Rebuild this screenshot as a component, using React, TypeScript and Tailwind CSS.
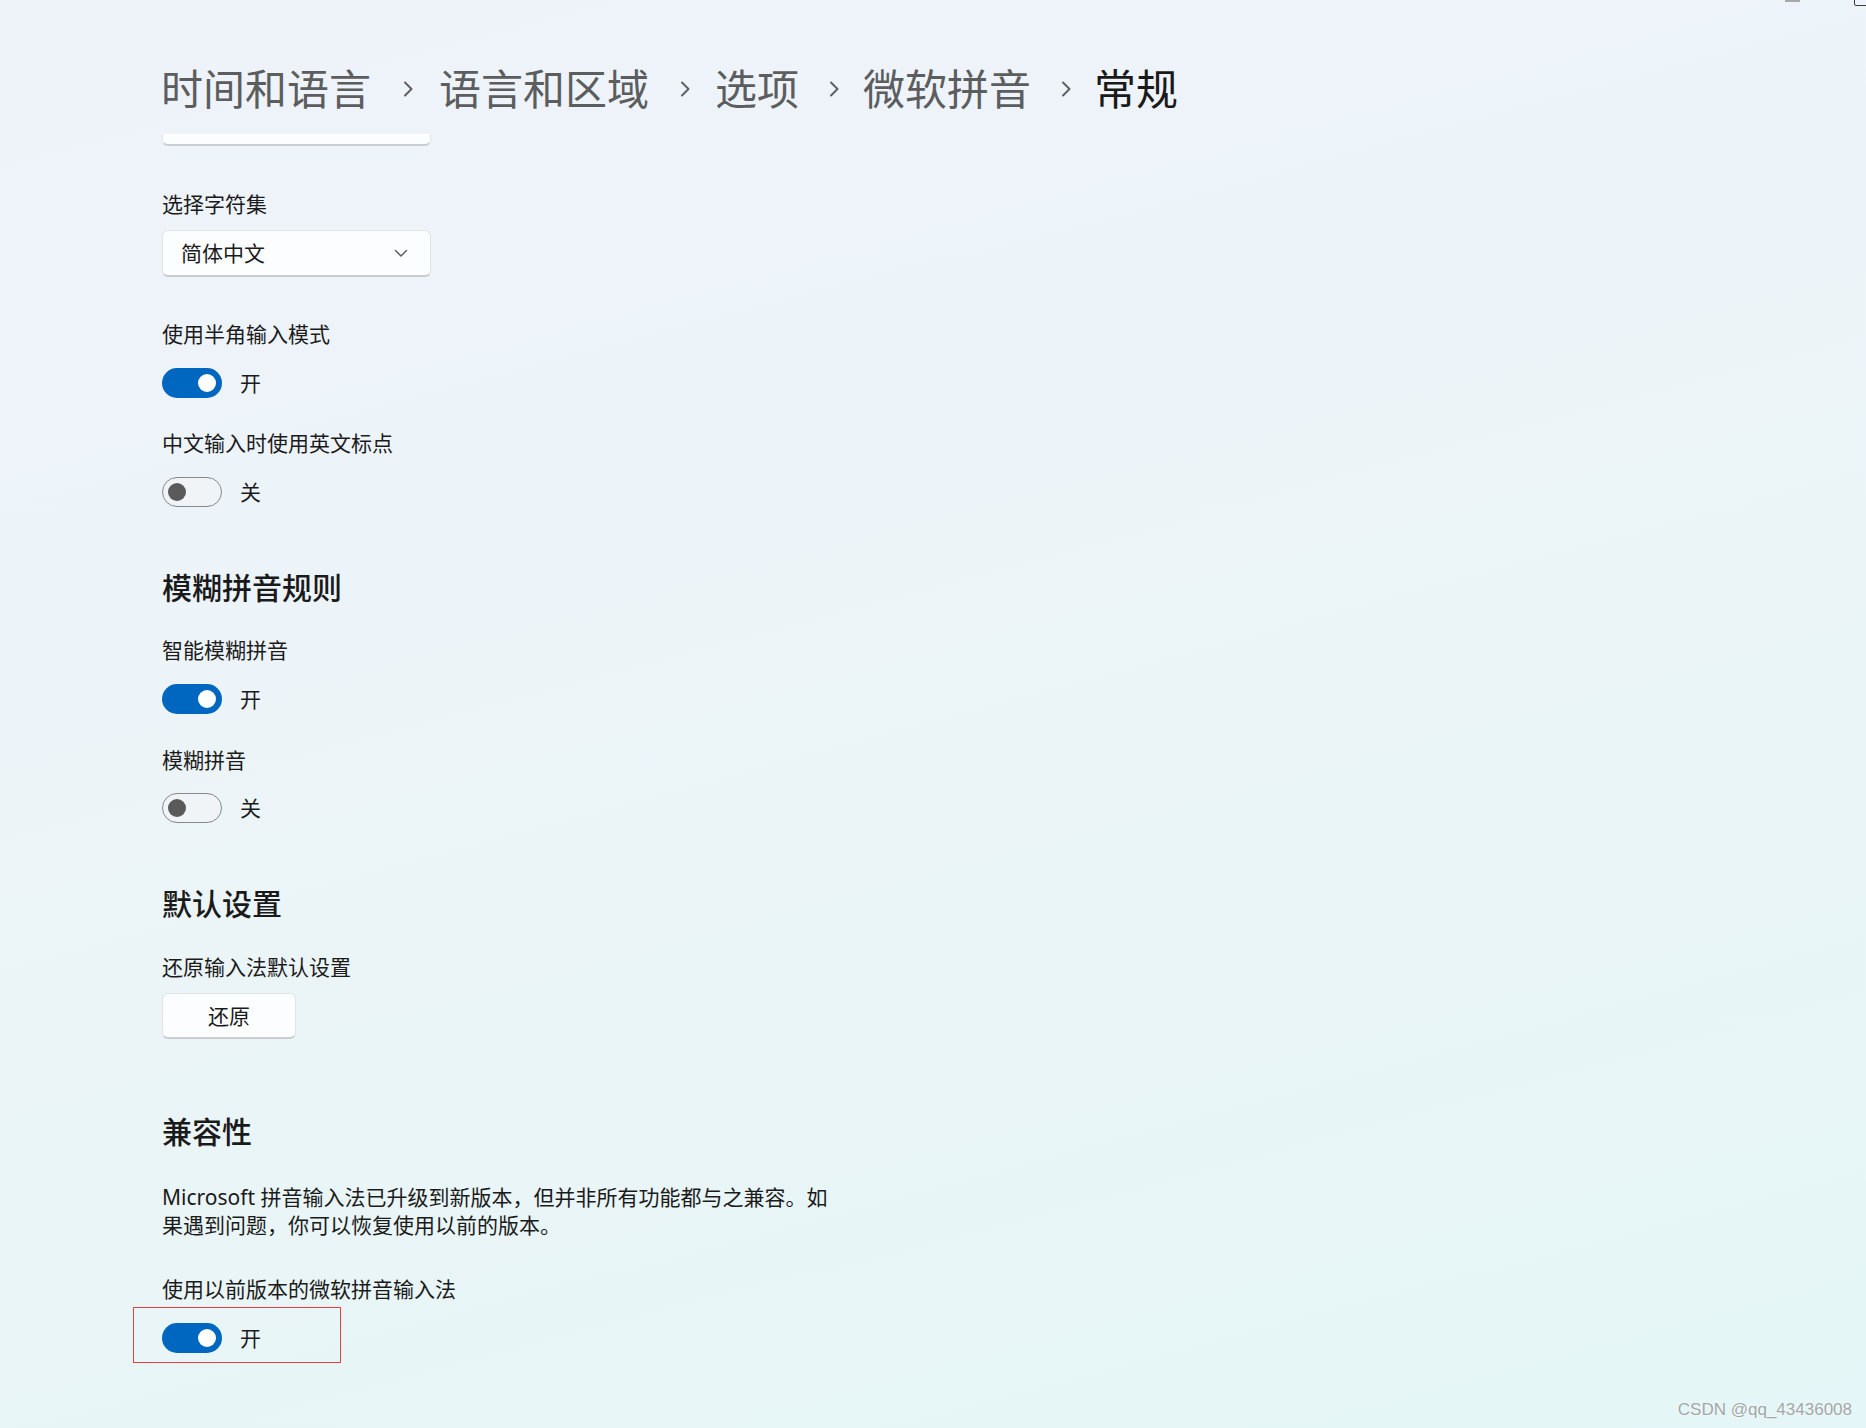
import React from "react";

function Chevron() {
  return (
    <svg width="12" height="18" viewBox="0 0 12 18" className="mx-0 shrink-0" fill="none">
      <path d="M3 2.5 L9.5 9 L3 15.5" stroke="#5f5f5f" strokeWidth="2" strokeLinecap="round" strokeLinejoin="round" />
    </svg>
  );
}

function Toggle({ on }: { on: boolean }) {
  if (on) {
    return (
      <div className="flex h-[30px] w-[60px] shrink-0 items-center justify-end rounded-full bg-[#0067c0] pr-[6px]">
        <div className="h-[18px] w-[18px] rounded-full bg-white" />
      </div>
    );
  }
  return (
    <div className="flex h-[30px] w-[60px] shrink-0 items-center rounded-full border-[1.5px] border-[#86898c] bg-[#f0f4f6] pl-[4.5px]">
      <div className="h-[18px] w-[18px] rounded-full bg-[#5a5a5a]" />
    </div>
  );
}

function ToggleRow({ on, className = "" }: { on: boolean; className?: string }) {
  return (
    <div className={"flex h-[30px] items-center gap-[18px] " + className}>
      <Toggle on={on} />
      <span className="text-[21px] leading-[30px] text-[#1b1b1b]">{on ? "开" : "关"}</span>
    </div>
  );
}

function Label({ children, className = "" }: { children: React.ReactNode; className?: string }) {
  return <div className={"h-[30px] text-[21px] leading-[30px] text-[#1b1b1b] " + className}>{children}</div>;
}

function Heading({ children, className = "" }: { children: React.ReactNode; className?: string }) {
  return <div className={"h-[40px] text-[30px] font-medium leading-[40px] text-[#1a1a1a] " + className}>{children}</div>;
}

export default function App() {
  return (
    <div className="relative h-[1428px] w-full overflow-hidden bg-[linear-gradient(165deg,#eef3fa_0%,#edf4f9_35%,#e9f5f6_70%,#e4f6f7_100%)] [font-family:'Noto_Sans','Noto_Sans_CJK_SC',sans-serif]">
      {/* window controls peeking at the top right */}
      <div className="absolute left-[1785px] top-0 h-[1.5px] w-[15px] bg-[#a8a8a8]" />
      <div className="absolute left-[1854px] top-[-6px] h-[12px] w-[14px] rounded-[2px] border-[1.5px] border-[#3a3a3a]" />

      <header className="h-[117px] pl-[161px] pt-[61px]">
        <nav className="flex h-[56px] items-center text-[42px] leading-[56px] text-[#5c5d5f]">
          <span>时间和语言</span>
          <span className="ml-[31px] mr-[25px] flex items-center"><Chevron /></span>
          <span>语言和区域</span>
          <span className="ml-[30px] mr-[24px] flex items-center"><Chevron /></span>
          <span>选项</span>
          <span className="ml-[29px] mr-[23px] flex items-center"><Chevron /></span>
          <span>微软拼音</span>
          <span className="ml-[29px] mr-[22px] flex items-center"><Chevron /></span>
          <span className="text-[#1a1a1a]">常规</span>
        </nav>
      </header>

      <main className="flex flex-col items-start pl-[162px]">
        <div className="mt-[17px] h-[12px] w-[269px] rounded-b-[6px] border-x border-b-2 border-x-[#e3e6e9] border-b-[#cbced1] bg-[#fbfdfe]" />

        <Label className="mt-[43px]">选择字符集</Label>
        <div className="mt-[11px] flex h-[47px] w-[269px] items-center justify-between rounded-[6px] border border-b-2 border-[#e1e4e7] border-b-[#c9ccd0] bg-[#fbfdfe] pl-[18px] pr-[22px]">
          <span className="text-[21px] leading-[30px] text-[#1b1b1b]">简体中文</span>
          <svg width="14" height="9" viewBox="0 0 14 9" fill="none">
            <path d="M1.5 1.5 L7 7 L12.5 1.5" stroke="#5f5f5f" strokeWidth="1.5" strokeLinecap="round" strokeLinejoin="round" />
          </svg>
        </div>

        <Label className="mt-[42px]">使用半角输入模式</Label>
        <ToggleRow on className="mt-[19px]" />

        <Label className="mt-[30px]">中文输入时使用英文标点</Label>
        <ToggleRow on={false} className="mt-[19px]" />

        <Heading className="mt-[61px]">模糊拼音规则</Heading>
        <Label className="mt-[27px]">智能模糊拼音</Label>
        <ToggleRow on className="mt-[19px]" />
        <Label className="mt-[31px]">模糊拼音</Label>
        <ToggleRow on={false} className="mt-[18px]" />

        <Heading className="mt-[61px]">默认设置</Heading>
        <Label className="mt-[28px]">还原输入法默认设置</Label>
        <button className="mt-[11px] flex h-[46px] w-[134px] items-center justify-center rounded-[6px] border border-b-2 border-[#e1e4e7] border-b-[#c9ccd0] bg-[#fbfdfe] text-[21px] leading-[30px] text-[#1b1b1b]">
          还原
        </button>

        <Heading className="mt-[73px]">兼容性</Heading>
        <p className="mt-[31px] text-[21px] leading-[28px] text-[#1b1b1b]">
          Microsoft 拼音输入法已升级到新版本，但并非所有功能都与之兼容。如
          <br />
          果遇到问题，你可以恢复使用以前的版本。
        </p>

        <Label className="mt-[35px]">使用以前版本的微软拼音输入法</Label>
        <div className="relative mt-[19px]">
          <ToggleRow on />
          <div className="pointer-events-none absolute left-[-29px] top-[-16px] h-[56px] w-[208px] border border-[#e8413b]" />
        </div>
      </main>

      <div className="absolute bottom-[7px] right-[14px] text-[17px] leading-[22px] text-[#a3a6a8] [font-family:'Liberation_Sans',Arial,sans-serif] [text-shadow:0_0_2px_#ffffff]">
        CSDN @qq_43436008
      </div>
    </div>
  );
}
